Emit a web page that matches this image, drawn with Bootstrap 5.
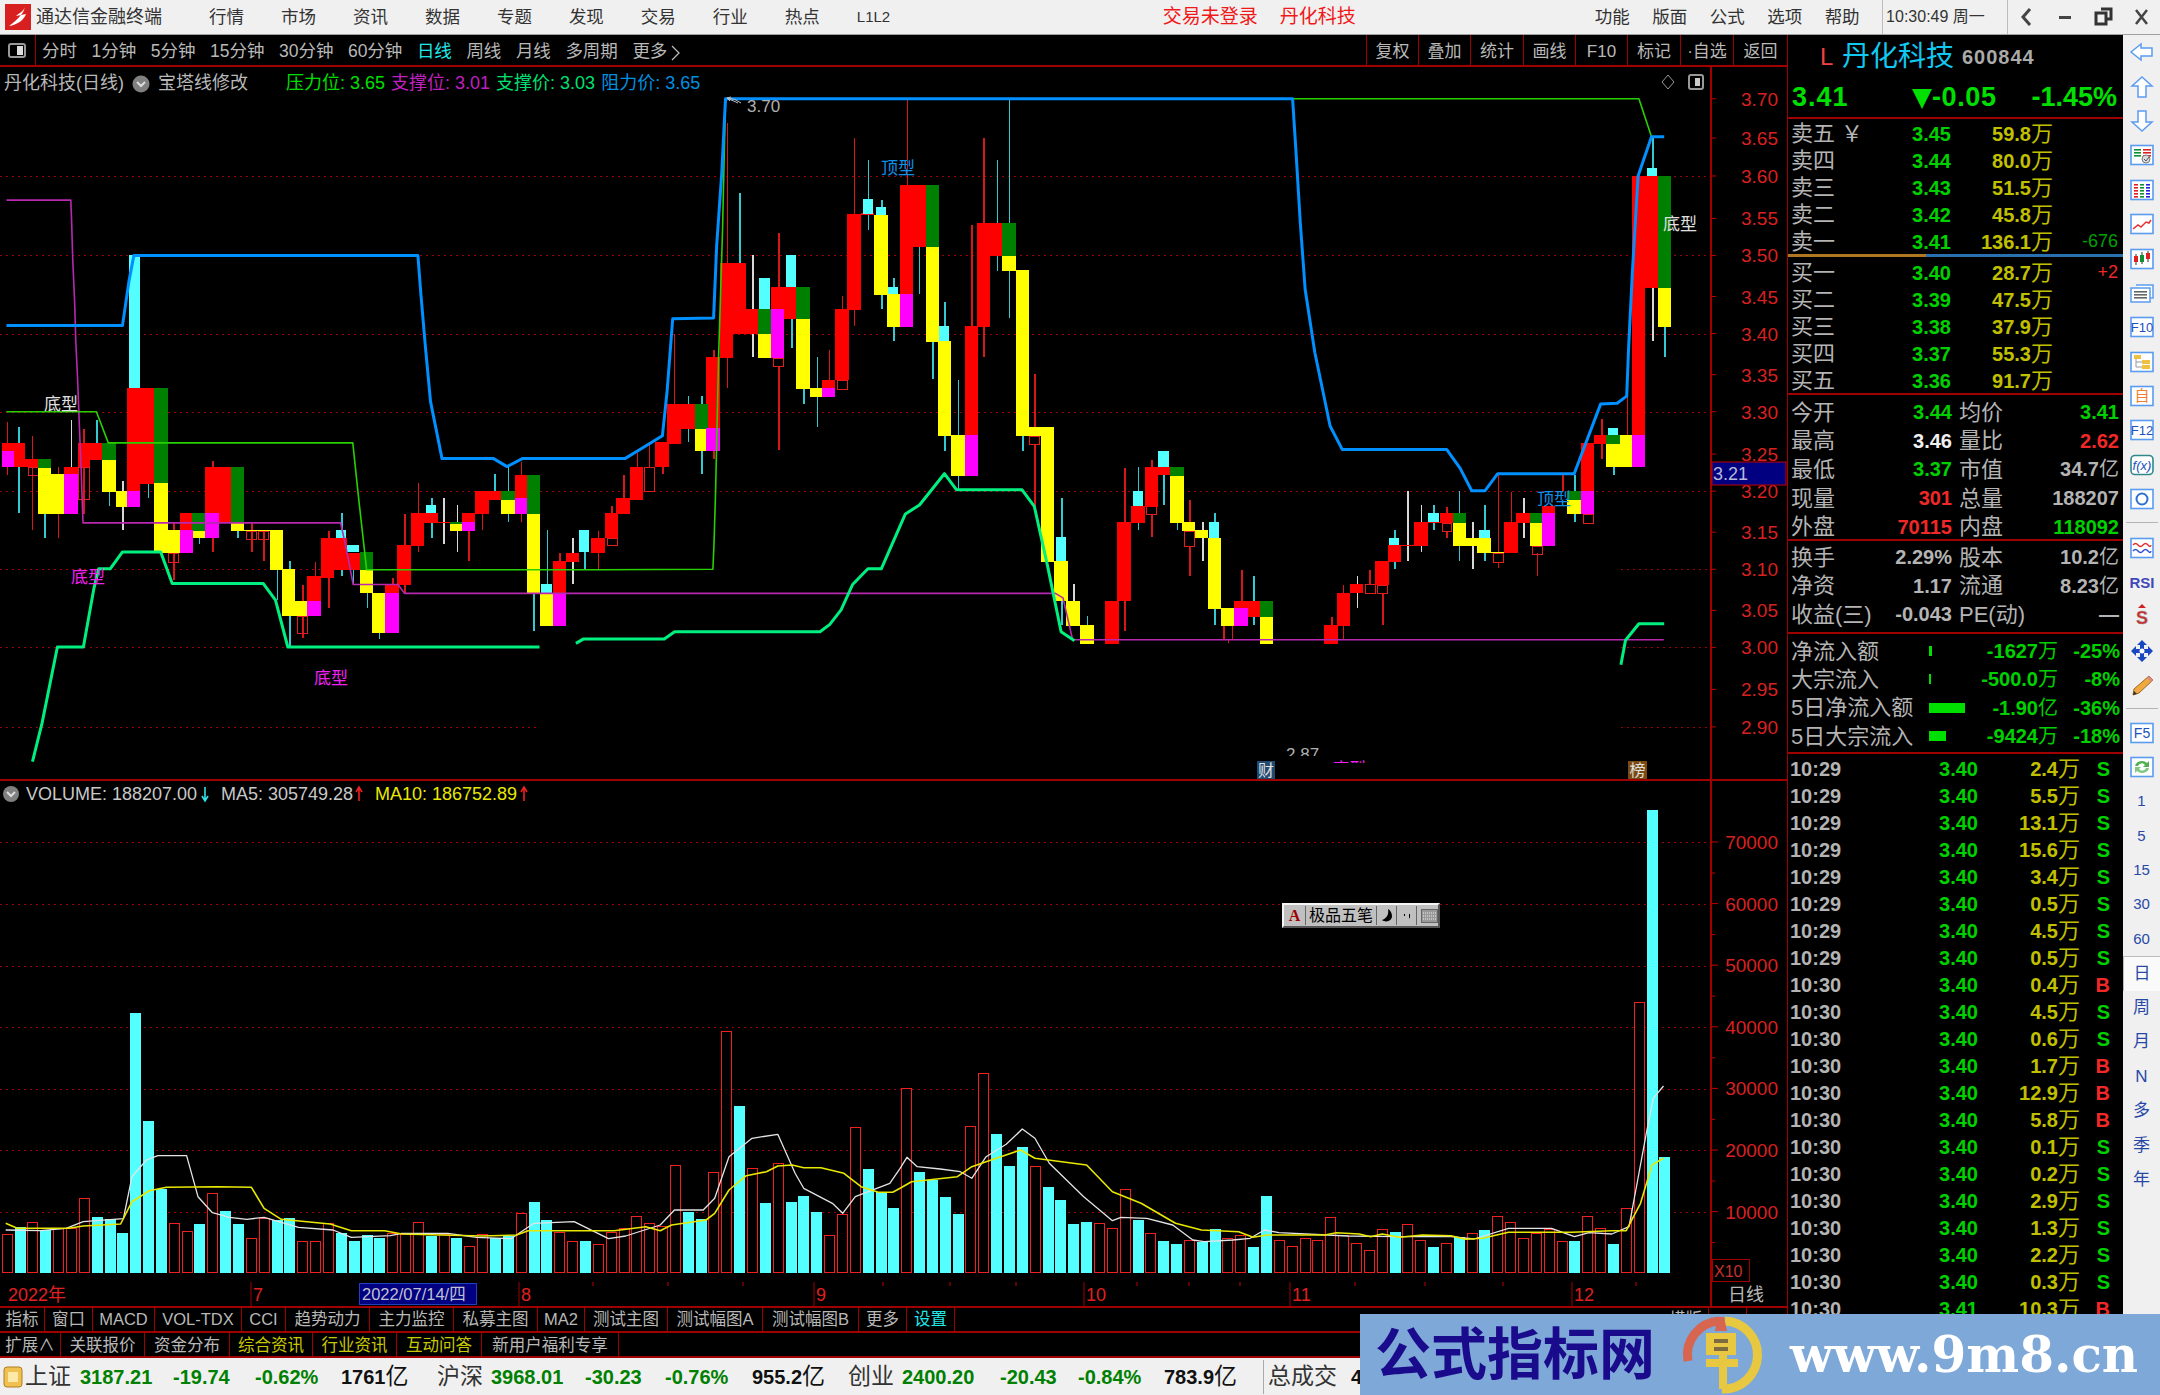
<!DOCTYPE html>
<html lang="zh-CN">
<head>
  <meta charset="UTF-8">
  <title>通达信金融终端</title>
  <link href="https://cdn.jsdelivr.net/npm/bootstrap@5.3.0/dist/css/bootstrap.min.css" rel="stylesheet">
  <script src="https://cdn.jsdelivr.net/npm/bootstrap@5.3.0/dist/js/bootstrap.bundle.min.js"></script>
  <style>
    html, body { margin: 0; background: #000; }
    body, svg text { font-family: "Liberation Sans", "Noto Sans CJK SC", sans-serif; }
    .app { width: 2160px; height: 1395px; overflow: hidden; }
    .titlebar { height: 35px; background: #f0f0f0; border-bottom: 1px solid #a0a0a0; color: #333; font-size: 17.5px; }
    .tb-logo { margin: 0 5px; }
    .tb-name { width: 173px; font-size: 18px; }
    .tb-menu { width: 72px; }
    .tb-l12 { width: 90px; font-size: 15px; }
    .tb-red { color: #f01818; font-size: 19px; margin-left: 216px; width: 117px; }
    .tb-red2 { color: #f01818; font-size: 19px; width: 315px; }
    .tb-r { width: 57.5px; }
    .tb-clock { border-left: 1px solid #bbb; border-right: 1px solid #bbb; height: 34px; width: 126px; padding-left: 3px; font-size: 16px; white-space: nowrap; }
    .tb-win { width: 38px; }
    .mainrow { height: 1323px; }
    .leftcol { width: 1788px; border-right: 1px solid #a00000; background: #000; }
    .toolbar { height: 32px; border-bottom: 2px solid #a00000; color: #b8b8b8; font-size: 17.5px; white-space: nowrap; }
    .tl-first { width: 36px; height: 30px; border-right: 1px solid #a00000; }
    .tl-item { margin-left: 14.5px; padding-top: 3px; }
    .tl-item:first-child { margin-left: 6px; }
    .tl-on { color: #20e8e8; }
    .tr-item { height: 30px; border-left: 1px solid #a00000; padding-top: 3px; font-size: 17px; }
    .chart-wrap { height: 714px; }
    .chart-wrap svg, .vol-svg, .date-svg { display: block; }
    .legend-row { top: 3px; left: 4px; font-size: 18px; color: #b8b8b8; white-space: nowrap; }
    .lg-a { color: #00e000; margin-left: 38px; }
    .lg-b { color: #c020c0; margin-left: 6px; }
    .lg-c { color: #00e070; margin-left: 6px; }
    .lg-d { color: #0090e0; margin-left: 6px; }
    .ime-bar { left: 1282px; top: 122px; width: 158px; height: 25px; background: #c0c0c0; border: 2px solid; border-color: #f4f4f4 #555 #555 #f4f4f4; color: #000; font-size: 16px; }
    .ime-cell { height: 19px; border-right: 1px solid #666; }
    .ime-a { color: #a00000; font-weight: 700; width: 22px; font-family: "Liberation Serif", serif; }
    .ime-name { width: 72px; white-space: nowrap; }
    .ime-s { width: 20px; }
    .tabrow { color: #b8b8b8; font-size: 16.5px; border-top: 2px solid #a00000; white-space: nowrap; }
    .tabrow1 { height: 25px; }
    .tabrow2 { height: 27px; border-bottom: 2px solid #a00000; }
    .tabrow2 .tab-cell { padding-top: 2px; }
    .tab-cell { border-right: 1px solid #a00000; height: 100%; }
    .tab-cyan { color: #20e8e8; }
    .tab-yel { color: #c8c800; }
    .quote { width: 335px; background: #000; color: #b4b4b4; font-size: 22px; }
    .q-head { height: 42px; padding-top: 2px; }
    .q-l { color: #f04040; width: 54px; padding-left: 32px; font-size: 24px; }
    .q-name { color: #10c8f0; font-size: 28px; width: 120px; white-space: nowrap; }
    .q-code { font-size: 20px; font-weight: 700; color: #aaa; letter-spacing: 1px; }
    .q-price { height: 42px; border-bottom: 2px solid #a00000; color: #00e000; font-weight: 700; font-size: 27px; }
    .q-p1 { width: 124px; padding-left: 4px; letter-spacing: 1px; }
    .q-p2 { width: 111px; white-space: nowrap; letter-spacing: .6px; }
    .q-p3 { width: 94px; text-align: right; white-space: nowrap; }
    .ord-row { height: 27px; padding-top: 2px; }
    .num { font-weight: 700; font-size: 20px; }
    .c-l { width: 122px; padding-left: 3px; white-space: nowrap; }
    .c-p { width: 41px; text-align: right; color: #00d000; }
    .c-a { width: 102px; text-align: right; color: #c0c000; white-space: nowrap; }
    .c-a .zh { font-size: 22px; }
    .zh { font-weight: 400; }
    .c-d { width: 65px; text-align: right; font-size: 18px; }
    .q-mid { height: 3px; background: linear-gradient(90deg, #b07820 0 138px, #2870b0 138px); margin-bottom: 1px; }
    .sec { border-top: 2px solid #a00000; }
    .sec-a { height: 146px; padding-top: 2px; }
    .sec-a .st-row { padding-top: 2px; }
    .sec-b { height: 93px; padding-top: 2px; }
    .sec-c { height: 120px; padding-top: 3px; }
    .st-row { height: 28.6px; }
    .s-l { width: 103px; padding-left: 3px; white-space: nowrap; }
    .s-v { width: 61px; text-align: right; white-space: nowrap; }
    .s-l2 { width: 70px; margin-left: 7px; white-space: nowrap; }
    .s-v2 { width: 90px; text-align: right; white-space: nowrap; }
    .fl-row { height: 28.3px; }
    .f-l { width: 141px; padding-left: 3px; white-space: nowrap; }
    .f-b { width: 40px; }
    .f-bar { height: 10px; background: #00e000; }
    .f-n { width: 89px; text-align: right; color: #00d000; white-space: nowrap; }
    .f-p { width: 62px; text-align: right; color: #00d000; }
    .tick-row { height: 27px; font-size: 20px; padding-top: 2px; }
    .tk-t { width: 149px; padding-left: 2px; color: #b4b4b4; }
    .tk-s { width: 30px; text-align: right; }
    .c-g { color: #00d000; }
    .c-g2 { color: #00a000; }
    .c-r { color: #f02828; }
    .c-w { color: #f0f0f0; }
    .c-y { color: #c0c000; }
    .sidebar { width: 37px; background: #f0f0f0; color: #2848a8; font-size: 15px; }
    .sb-item { height: 34.4px; }
    .sb-on { background: #fafafa; border: 1px solid #bbb; border-bottom: 0; border-right: 0; font-size: 17px; }
    .sb-zh { font-size: 17px; }
    .sb-sep { height: 14px; }
    .sb-sep2 { height: 13px; }
    .sb-sep i, .sb-sep2 i { display: block; width: 32px; height: 1px; background: #b4b4b4; margin: 6px auto 0; }
    .statusbar { height: 37px; background: #f0f0f0; color: #111; font-size: 20px; font-weight: 700; white-space: nowrap; }
    .sts-ic { width: 25px; }
    .sts-zh { font-weight: 400; font-size: 23px; color: #333; }
    .sts-g { color: #008000; }
    .sts-u .zh { font-size: 23px; }
    .sts-sep { border-left: 1px solid #aaa; height: 34px; }
    .wm-bar { right: 0; bottom: 0; width: 800px; height: 81px; background: #7da8d8; padding-left: 15px; }
    .wm-zh { color: #1a0a8c; font-size: 56px; font-weight: 700; width: 305px; white-space: nowrap; line-height: 1; }
    .wm-logo { width: 110px; }
    .wm-en { color: #fff; font-family: "DejaVu Serif", serif; font-weight: 700; font-size: 50px; white-space: nowrap; line-height: 1; }
  </style>
</head>
<body>
<div class="app position-relative">

  <!-- title bar -->
  <div class="titlebar d-flex align-items-center" id="titlebar"></div>

  <div class="mainrow d-flex">
    <div class="leftcol d-flex flex-column">
      <!-- period toolbar -->
      <div class="toolbar d-flex align-items-center">
        <div class="tl-first d-flex align-items-center">
          <svg class="ms-2" width="18" height="15" viewBox="0 0 18 15"><rect x="1" y="1" width="16" height="13" rx="2" fill="none" stroke="#999" stroke-width="2"/><rect x="9" y="3" width="6" height="9" fill="#ddd"/></svg>
        </div>
        <div class="d-flex" id="periodItems"></div>
        <div class="d-flex ms-auto" id="toolItems"></div>
      </div>

      <!-- kline -->
      <div class="chart-wrap position-relative">
        <svg id="mainChart" width="1787" height="714" viewBox="0 67 1787 714"></svg>
        <div class="legend-row position-absolute d-flex align-items-center">
          <span>丹化科技(日线)</span>
          <svg class="mx-2" width="18" height="18" viewBox="0 0 18 18"><circle cx="9" cy="9" r="8.5" fill="#808080"/><path d="M5 7l4 4 4-4" fill="none" stroke="#ddd" stroke-width="2"/></svg>
          <span>宝塔线修改</span>
          <span class="lg-a">压力位: 3.65</span>
          <span class="lg-b">支撑位: 3.01</span>
          <span class="lg-c">支撑价: 3.03</span>
          <span class="lg-d">阻力价: 3.65</span>
        </div>
        <svg class="position-absolute" style="left:1660px;top:6px" width="46" height="18" viewBox="0 0 46 18"><path d="M8 2l6 7-6 7-6-7z" fill="none" stroke="#999"/><rect x="29" y="2" width="14" height="14" rx="2" fill="none" stroke="#999" stroke-width="2"/><rect x="35" y="5" width="5" height="8" fill="#ccc"/></svg>
      </div>

      <!-- volume -->
      <div class="position-relative">
        <svg class="vol-svg" id="volChart" width="1787" height="501" viewBox="0 781 1787 501"></svg>
        <!-- input method bar floating over the volume pane -->
        <div class="ime-bar position-absolute d-flex align-items-center">
          <span class="ime-cell ime-a d-flex align-items-center justify-content-center">A</span>
          <span class="ime-cell ime-name d-flex align-items-center justify-content-center">极品五笔</span>
          <span class="ime-cell ime-s d-flex align-items-center justify-content-center"><svg width="12" height="16" viewBox="0 0 12 16"><path d="M7 1c1 5-1 9-6 11 4 3 10 1 10-4 0-3-2-6-4-7z" fill="#000"/></svg></span>
          <span class="ime-cell ime-s d-flex align-items-center justify-content-center"><svg width="10" height="12" viewBox="0 0 10 12"><path d="M2 4h1v2H2zM7 4h1v3l-1 2z" fill="#000"/></svg></span>
          <span class="d-flex align-items-center ps-1"><svg width="17" height="14" viewBox="0 0 17 14"><rect x=".5" y=".5" width="16" height="13" fill="#999" stroke="#666"/><path d="M2 4h13M2 7h13M2 10h13" stroke="#eee" stroke-dasharray="1 1"/></svg></span>
        </div>
      </div>

      <!-- date axis -->
      <svg class="date-svg" id="dateAxis" width="1787" height="24" viewBox="0 1282 1787 24"></svg>

      <div class="tabrow tabrow1 d-flex" id="tabs1"></div>
      <div class="tabrow tabrow2 d-flex" id="tabs2"></div>
    </div>

    <!-- quote panel -->
    <div class="quote d-flex flex-column">
      <div class="q-head d-flex align-items-center">
        <span class="q-l">L</span>
        <span class="q-name">丹化科技</span>
        <span class="q-code">600844</span>
      </div>
      <div class="q-price d-flex align-items-center">
        <span class="q-p1">3.41</span>
        <span class="q-p2"><svg width="20" height="21" viewBox="0 0 20 21"><path d="M0 1h20L10 21z" fill="#00e000"/></svg>-0.05</span>
        <span class="q-p3">-1.45%</span>
      </div>
      <div id="sellRows"></div>
      <div class="q-mid"></div>
      <div id="buyRows"></div>
      <div class="sec sec-a" id="statsA"></div>
      <div class="sec sec-b" id="statsB"></div>
      <div class="sec sec-c" id="flows"></div>
      <div class="sec" id="ticks"></div>
    </div>

    <!-- right icon rail -->
    <div class="sidebar d-flex flex-column align-items-center" id="sidebar"></div>
  </div>

  <!-- index status bar -->
  <div class="statusbar d-flex align-items-center" id="statusbar"></div>

  <!-- site watermark -->
  <div class="wm-bar position-absolute d-flex align-items-center">
    <div class="wm-zh">公式指标网</div>
    <div class="wm-logo">
      <svg width="84" height="80" viewBox="0 0 84 80">
        <path d="M8 46A34 34 0 0 1 39 6" fill="none" stroke="#d8654f" stroke-width="9"/>
        <path d="M45 6A34 34 0 0 1 42 74" fill="none" stroke="#e8c840" stroke-width="9"/>
        <path d="M38 2h6l3 14h-12z" fill="#d8654f"/>
        <path d="M26 18h30v22H47v4h11v8H47v22h-8V52H26v-8h13v-4H26z" fill="#e8c840"/>
        <path d="M34 24h14v4H34zM34 32h14v4H34z" fill="#7d6a40"/>
      </svg>
    </div>
    <div class="wm-en">www.9m8.cn</div>
  </div>
</div>

<script>
  // ---------- small html helpers ----------
  const byId = id => document.getElementById(id);
  const zhNum = s => s.replace(/([万亿])/g, '<span class="zh">$1</span>');

  const winIcons = [
    '<path d="M14 4l-7 8 7 8" fill="none" stroke="#444" stroke-width="3"/>',
    '<rect x="5" y="11" width="12" height="3" fill="#444"/>',
    '<path d="M9 4h10v10h-4M4 8h10v11H4z" fill="none" stroke="#333" stroke-width="3"/>',
    '<path d="M6 5l11 14M17 5L6 19" fill="none" stroke="#444" stroke-width="2.5"/>'
  ];

  byId('titlebar').innerHTML =
    `<svg class="tb-logo" width="26" height="26" viewBox="0 0 26 26"><rect width="26" height="26" fill="#d82020"/><path d="M20 3c-2 5-6 6-9 9l5-1c-3 4-7 7-12 11 8-1 15-6 17-12l-5 1c2-2 3-5 4-8z" fill="#fff"/></svg>` +
    `<span class="tb-name">通达信金融终端</span>` +
    ['行情','市场','资讯','数据','专题','发现','交易','行业','热点'].map(t => `<span class="tb-menu">${t}</span>`).join('') +
    `<span class="tb-l12">L1L2</span><span class="tb-red">交易未登录</span><span class="tb-red2">丹化科技</span>` +
    ['功能','版面','公式','选项','帮助'].map(t => `<span class="tb-r">${t}</span>`).join('') +
    `<span class="tb-clock d-flex align-items-center">10:30:49&nbsp;周一</span>` +
    winIcons.map(p => `<span class="tb-win d-flex justify-content-center"><svg width="22" height="24" viewBox="0 0 22 24">${p}</svg></span>`).join('');

  const chevron = '<svg class="ms-1" width="9" height="16" viewBox="0 0 9 16"><path d="M1 1l7 7-7 7" fill="none" stroke="#b8b8b8" stroke-width="1.3"/></svg>';
  const periods = ['分时','1分钟','5分钟','15分钟','30分钟','60分钟','日线','周线','月线','多周期','更多' + chevron];
  byId('periodItems').innerHTML = periods.map(t => `<span class="tl-item${t === '日线' ? ' tl-on' : ''}">${t}</span>`).join('');

  const tools = [['复权',52],['叠加',52],['统计',53],['画线',52],['F10',52],['标记',53],['·自选',53],['返回',54]];
  byId('toolItems').innerHTML = tools.map(([t, w]) =>
    `<span class="tr-item d-flex align-items-center justify-content-center" style="width:${w}px">${t}</span>`).join('');

  const tabCell = ([t, w, c]) =>
    `<span class="tab-cell d-flex align-items-center justify-content-center ${c || ''}" style="width:${w}px">${t}</span>`;
  byId('tabs1').innerHTML = [['指标',45],['窗口',48],['MACD',62],['VOL-TDX',87],['CCI',44],['趋势动力',84],['主力监控',84],['私募主图',84],['MA2',47],['测试主图',83],['测试幅图A',95],['测试幅图B',96],['更多',48],['设置',48,'tab-cyan']].map(tabCell).join('')
    + '<span class="ms-auto d-flex h-100">' + [['横版',46],['',38]].map(tabCell).join('') + '<span style="width:40px"></span></span>';
  byId('tabs2').innerHTML = [['扩展∧',61],['关联报价',84],['资金分布',85],['综合资讯',83,'tab-yel'],['行业资讯',84,'tab-yel'],['互动问答',85,'tab-yel'],['新用户福利专享',137]].map(tabCell).join('');

  // ---------- quote panel ----------
  const ordRow = (lab, p, a, d, dc) =>
    `<div class="ord-row d-flex align-items-center"><span class="c-l">${lab}</span><span class="c-p num">${p}</span>` +
    `<span class="c-a num">${zhNum(a)}</span><span class="c-d ${dc || ''}">${d || ''}</span></div>`;
  byId('sellRows').innerHTML = [
    ['卖五 ￥','3.45','59.8万'],['卖四','3.44','80.0万'],['卖三','3.43','51.5万'],['卖二','3.42','45.8万'],['卖一','3.41','136.1万','-676','c-g2']
  ].map(r => ordRow(...r)).join('');
  byId('buyRows').innerHTML = [
    ['买一','3.40','28.7万','+2','c-r'],['买二','3.39','47.5万'],['买三','3.38','37.9万'],['买四','3.37','55.3万'],['买五','3.36','91.7万']
  ].map(r => ordRow(...r)).join('');

  const stRow = ([a, v, vc, b, w, wc]) =>
    `<div class="st-row d-flex align-items-center"><span class="s-l">${a}</span><span class="s-v num ${vc}">${v}</span>` +
    `<span class="s-l2">${b}</span><span class="s-v2 num ${wc}">${zhNum(w)}</span></div>`;
  byId('statsA').innerHTML = [
    ['今开','3.44','c-g','均价','3.41','c-g'],['最高','3.46','c-w','量比','2.62','c-r'],['最低','3.37','c-g','市值','34.7亿',''],
    ['现量','301','c-r','总量','188207',''],['外盘','70115','c-r','内盘','118092','c-g']
  ].map(stRow).join('');
  byId('statsB').innerHTML = [
    ['换手','2.29%','','股本','10.2亿',''],['净资','1.17','','流通','8.23亿',''],['收益(三)','-0.043','','PE(动)','—','']
  ].map(stRow).join('');

  byId('flows').innerHTML = [
    ['净流入额',3,'-1627万','-25%'],['大宗流入',2,'-500.0万','-8%'],['5日净流入额',36,'-1.90亿','-36%'],['5日大宗流入',17,'-9424万','-18%']
  ].map(([l, w, n, p]) =>
    `<div class="fl-row d-flex align-items-center"><span class="f-l">${l}</span><span class="f-b"><div class="f-bar" style="width:${w}px"></div></span>` +
    `<span class="f-n num">${zhNum(n)}</span><span class="f-p num">${p}</span></div>`).join('');

  const ticks = [['10:29','2.4','S'],['10:29','5.5','S'],['10:29','13.1','S'],['10:29','15.6','S'],['10:29','3.4','S'],['10:29','0.5','S'],['10:29','4.5','S'],['10:29','0.5','S'],
    ['10:30','0.4','B'],['10:30','4.5','S'],['10:30','0.6','S'],['10:30','1.7','B'],['10:30','12.9','B'],['10:30','5.8','B'],['10:30','0.1','S'],['10:30','0.2','S'],['10:30','2.9','S'],['10:30','1.3','S'],['10:30','2.2','S'],['10:30','0.3','S'],['10:30','10.3','B','3.41']];
  byId('ticks').innerHTML = ticks.map(([t, v, s, p]) =>
    `<div class="tick-row d-flex align-items-center"><span class="tk-t num">${t}</span><span class="c-p num">${p || '3.40'}</span>` +
    `<span class="c-a num">${v}<span class="zh">万</span></span><span class="tk-s num ${s === 'S' ? 'c-g' : 'c-r'}">${s}</span></div>`).join('');

  // ---------- right rail icons ----------
  const B = '#5a9cf0';
  const ic = inner => `<svg width="26" height="24" viewBox="0 0 26 24">${inner}</svg>`;
  const boxIc = inner => ic(`<rect x="2" y="2.5" width="22" height="19" fill="#fff" stroke="${B}" stroke-width="1.6"/>${inner}`);
  const boxTxt = (t, c, s) => boxIc(`<text x="13" y="17" text-anchor="middle" font-size="${s || 14}" fill="${c}">${t}</text>`);
  const bars = (x, y, w, c, n) => Array.from({ length: n }, (_, i) => `<rect x="${x}" y="${y + i * 3}" width="${w}" height="1.6" fill="${c}"/>`).join('');
  const railTop = [
    ic(`<path d="M2 12l10-8v4h11v8H12v4z" fill="#fff" stroke="${B}" stroke-width="1.5"/>`),
    ic(`<path d="M13 2l10 9h-6v11H9V11H3z" fill="#fff" stroke="${B}" stroke-width="1.5"/>`),
    ic(`<path d="M13 22L3 13h6V2h8v11h6z" fill="#fff" stroke="${B}" stroke-width="1.5"/>`),
    boxIc(bars(5, 6, 7, '#109030', 3) + bars(14, 6, 8, '#e02020', 3) + '<circle cx="17" cy="16" r="4" fill="#ddd" stroke="#777"/><path d="M15 16l2 2 3-4" fill="none" stroke="#555"/>'),
    boxIc(bars(5, 6, 4, '#e02020', 5) + bars(11, 6, 4, '#109030', 5) + bars(17, 6, 4, '#2020e0', 5)),
    boxIc('<path d="M4 17l5-4 3 2 5-5 3 1 2-3" fill="none" stroke="#e83030" stroke-width="1.5"/>'),
    boxIc('<path d="M7 7v11M13 5v12M19 4v11" stroke="#333"/><rect x="5" y="9" width="4" height="6" fill="#e02020"/><rect x="11" y="8" width="4" height="7" fill="#109030"/><rect x="17" y="6" width="4" height="6" fill="#e02020"/>'),
    ic(`<path d="M7 4h17v13h-3" fill="#fff" stroke="${B}" stroke-width="1.5"/><rect x="2" y="7" width="19" height="14" fill="#fff" stroke="${B}" stroke-width="1.5"/>` + bars(5, 10, 13, '#666', 3)),
    boxTxt('F10', '#2050c0', 13),
    boxIc('<rect x="5" y="5" width="7" height="4" fill="#f0c040"/><rect x="13" y="10" width="8" height="4" fill="#f0c040"/><rect x="13" y="15" width="8" height="4" fill="#f0c040"/><path d="M7 9v8h6M7 12h6" fill="none" stroke="#999"/>'),
    boxTxt('自', '#f08030', 15),
    boxTxt('F12', '#2050c0', 13),
    ic(`<rect x="2" y="2.5" width="22" height="19" rx="4" fill="#fff" stroke="#2c8a8a" stroke-width="1.6"/><text x="13" y="17" text-anchor="middle" font-size="13" font-style="italic" fill="#2050c0">f(x)</text>`),
    boxIc('<circle cx="13" cy="12" r="5.5" fill="none" stroke="#3070d0" stroke-width="2"/>'),
    'sep',
    boxIc('<path d="M4 9q2.500-3 5 0t5 0 5 0 3 0" fill="none" stroke="#e03030" stroke-width="1.4"/><path d="M4 15q2.500-3 5 0t5 0 5 0 3 0" fill="none" stroke="#3050d0" stroke-width="1.4"/>'),
    ic('<text x="13" y="18" text-anchor="middle" font-size="15" font-weight="700" fill="#4048b8">RSI</text>'),
    ic('<path d="M13 0l4 4h-8z" fill="#d02020"/><text x="13" y="20" text-anchor="middle" font-size="18" font-weight="700" fill="#c83030" stroke="#999" stroke-width=".4">S</text>'),
    ic('<path d="M13 1l5 5h-3v4h4V7l5 5-5 5v-3h-4v4h3l-5 5-5-5h3v-4H7v3l-5-5 5-5v3h4V6H8z" fill="#1848c0"/><circle cx="13" cy="12" r="2.500" fill="#fff"/>'),
    ic('<path d="M20 3l4 4L10 20l-6 2 1-6z" fill="#f0a840" stroke="#a06820"/><path d="M20 3l4 4-2 2-4-4z" fill="#d88"/><path d="M4 22l1-4 3 3z" fill="#333"/>'),
    'sep2',
    boxTxt('F5', '#2050c0', 14),
    boxIc('<path d="M6 11a7 6 0 0 1 12-3l2-2v6h-6l2-2a4 4 0 0 0-7 1z" fill="#50b050"/><path d="M20 13a7 6 0 0 1-12 3l-2 2v-6h6l-2 2a4 4 0 0 0 7-1z" fill="#80c880"/>')
  ];
  let rail = railTop.map(h => h === 'sep' ? '<div class="sb-sep w-100"><i></i></div>' : h === 'sep2' ? '<div class="sb-sep2 w-100"><i></i></div>' :
    `<div class="sb-item d-flex align-items-center">${h}</div>`).join('');
  rail += ['1','5','15','30','60'].map(t => `<div class="sb-item d-flex align-items-center">${t}</div>`).join('');
  rail += '<div class="sb-item sb-on w-100 d-flex align-items-center justify-content-center">日</div>';
  rail += ['周','月','N','多','季','年'].map(t => `<div class="sb-item sb-zh d-flex align-items-center">${t}</div>`).join('');
  byId('sidebar').innerHTML = rail;

  // ---------- status bar ----------
  const sts = [['上证',55,'sts-zh'],['3187.21',93,'sts-g'],['-19.74',82,'sts-g'],['-0.62%',86,'sts-g'],['1761亿',96,'sts-u'],
    ['沪深',54,'sts-zh'],['3968.01',94,'sts-g'],['-30.23',80,'sts-g'],['-0.76%',87,'sts-g'],['955.2亿',96,'sts-u'],
    ['创业',54,'sts-zh'],['2400.20',98,'sts-g'],['-20.43',78,'sts-g'],['-0.84%',86,'sts-g'],['783.9亿',99,'sts-u']];
  byId('statusbar').innerHTML =
    `<span class="sts-ic d-flex justify-content-center"><svg width="20" height="24" viewBox="0 0 20 24"><rect x="1" y="2" width="18" height="20" rx="3" fill="#f0c050" stroke="#b08020"/><rect x="5" y="7" width="10" height="10" fill="#fbe9a8"/></svg></span>` +
    sts.map(([t, w, c]) => `<span class="${c}" style="width:${w}px">${zhNum(t)}</span>`).join('') +
    '<span class="sts-sep me-1"></span><span class="sts-zh" style="width:83px">总成交</span><span>4</span>';

  // ---------- kline chart, data read off in crop coordinates ----------
  const mx = (ox, z) => ox + z / 2.6133;
  const my = z => 80 + z / 2.24;
  const COL = { r: '#ff0000', g: '#008000', y: '#ffff00', m: '#ff00ff', c: '#54ffff' };
  const R = '#d81818', CY = '#34c8d0', W = '#d8d8d8';

  const groups = [
    { ox: 0,
      r: [[5,813,66,830],[36,830,66,868],[66,850,98,868],[168,867,204,883],[204,813,235,868],[235,813,267,852],[333,690,367,920],[367,690,403,905],[470,970,502,1007],[537,867,572,970],[572,867,603,992],[803,1112,838,1166],[838,1025,873,1115],[873,1025,908,1097],[908,1060,941,1097],[1007,1132,1042,1148],[1038,1041,1074,1132],[1074,970,1109,1043],[1109,970,1145,992],[1145,989,1175,993],[1208,970,1242,990],[1242,921,1277,973],[1277,921,1310,940],[1345,884,1377,937],[1444,1078,1478,1150],[1478,1060,1513,1080],[1545,1025,1568,1060]],
      g: [[98,850,133,870],[267,813,302,852],[403,690,438,903],[502,970,537,1010],[603,867,638,992],[941,1058,975,1097],[1175,990,1208,995],[1310,921,1345,940],[1377,884,1411,973]],
      y: [[98,870,133,972],[133,883,168,972],[267,852,302,923],[302,920,333,956],[403,903,438,1060],[438,1007,470,1060],[505,1010,537,1027],[603,992,638,1010],[638,1007,705,1010],[705,1007,740,1097],[738,1095,772,1200],[772,1166,803,1200],[941,1097,975,1150],[973,1148,1007,1238],[1175,995,1208,1010],[1310,940,1345,973],[1377,973,1411,1149],[1411,1150,1444,1222]],
      m: [[5,830,36,868],[168,883,204,972],[333,920,367,956],[470,1007,505,1060],[537,970,572,1027],[803,1166,838,1200],[1007,1148,1042,1238],[1208,990,1242,1010],[1345,937,1377,973],[1444,1150,1478,1222]],
      c: [[338,392,365,690],[878,1007,905,1025],[908,1041,937,1058],[1113,953,1140,970],[1415,1128,1443,1150],[1513,1008,1540,1058]],
      h: [[72,868,98,886],[204,868,232,940],[440,1060,466,1080],[643,1010,670,1027],[675,1010,702,1027],[776,1200,803,1238]],
      wr: [[18,765,885],[83,798,1007],[151,868,1025],[218,782,972],[453,990,1120],[554,853,867],[554,1027,1058],[656,992,1058],[688,1010,1077],[789,1132,1250],[822,1080,1112],[857,1010,1025],[857,1115,1182],[1025,1115,1132],[1056,972,1041],[1056,1132,1150],[1092,903,970],[1092,1043,1058],[1224,1010,1077],[1259,973,1007],[1361,855,884],[1361,973,990],[1461,1060,1078],[1562,1010,1025],[1562,1060,1095]],
      wc: [[48,778,970],[115,972,1025],[252,762,813],[284,923,955],[386,905,937],[519,1027,1040],[620,1010,1025],[723,1097,1165],[755,1078,1270],[891,970,1007],[891,1098,1112],[922,1097,1130],[958,1150,1182],[990,1238,1252],[1127,937,1025],[1292,883,921],[1327,867,921],[1327,973,990],[1393,1150,1235],[1429,1007,1128],[1527,1058,1095]],
      ww: [[185,762,868],[319,898,1007],[1158,937,1040],[1193,953,1058],[1495,1025,1128]]
    },
    { ox: 600,
      r: [[0,1025,12,1060],[12,970,47,1027],[43,937,78,972],[78,867,113,940],[145,812,180,868],[176,726,212,815],[212,726,247,782],[278,620,313,780],[313,410,348,623],[348,410,381,570],[381,513,412,570],[447,463,482,513],[482,463,513,536],[580,671,615,691],[615,513,650,673],[646,301,682,515],[682,299,717,303],[784,235,819,480],[819,235,851,375],[953,550,988,796],[984,321,1019,553],[1019,321,1051,394],[1320,1166,1356,1263],[1352,991,1388,1168],[1388,954,1423,993],[1423,867,1458,956],[1458,867,1490,885]],
      g: [[247,726,281,782],[412,513,447,570],[513,463,549,536],[851,235,886,375],[1051,321,1086,394],[1490,867,1525,886]],
      y: [[247,782,278,832],[412,570,447,623],[513,536,549,693],[549,691,581,711],[717,303,753,482],[749,480,784,553],[851,375,886,586],[882,584,917,798],[917,796,953,886],[1051,394,1086,428],[1086,426,1121,798],[1121,778,1152,798],[1152,778,1187,1080],[1187,1078,1222,1167],[1219,1166,1254,1222],[1254,1220,1290,1263],[1490,886,1525,993],[1521,991,1556,1010],[1556,1008,1568,1027]],
      m: [[278,780,313,832],[447,513,482,623],[580,691,615,711],[784,480,819,553],[953,796,988,886]],
      c: [[416,443,443,513],[486,392,513,463],[686,267,713,301],[722,284,748,303],[753,463,780,480],[886,550,913,584],[1192,1024,1219,1078],[1392,921,1419,954],[1458,830,1486,867]],
      h: [[17,1027,43,1043],[115,868,140,922],[451,623,477,640],[620,673,646,693],[1122,798,1148,815],[1427,954,1453,973],[1526,1010,1552,1043]],
      wr: [[29,955,970],[60,885,937],[96,835,867],[127,818,868],[163,868,882],[193,570,726],[296,605,620],[296,832,850],[331,97,410],[331,623,690],[465,342,463],[465,640,828],[598,605,671],[632,484,513],[663,130,301],[663,515,550],[802,42,235],[970,325,550],[1001,130,321],[1001,553,620],[1135,658,778],[1135,815,955],[1370,870,991],[1370,1168,1235],[1440,852,867],[1440,973,1023],[1539,940,991],[1539,1043,1110]],
      wc: [[229,708,726],[229,782,812],[264,708,726],[264,832,883],[363,252,410],[500,536,600],[531,693,725],[566,620,691],[566,711,778],[700,180,267],[700,303,337],[735,268,284],[735,482,513],[766,443,463],[766,553,585],[833,375,480],[868,586,670],[899,497,550],[899,798,830],[935,672,796],[935,886,918],[1037,180,321],[1037,394,428],[1068,42,321],[1068,428,533],[1103,798,830],[1205,937,1024],[1205,1167,1220],[1272,1200,1220],[1405,867,921],[1405,993,1007],[1472,885,952],[1507,993,1007]],
      ww: [[398,392,513],[398,570,620],[1236,1128,1166]]
    },
    { ox: 1200,
      r: [[90,1166,125,1183],[125,1166,157,1202],[325,1220,361,1263],[357,1149,392,1222],[392,1130,427,1150],[458,1078,494,1132],[490,1041,525,1080],[525,1041,560,1044],[560,991,596,1043],[596,990,627,993],[627,971,660,993],[795,991,831,1060],[827,971,862,993],[893,955,928,971],[995,813,1030,921],[1030,796,1062,815],[1129,215,1164,796],[1164,215,1196,465]],
      g: [[157,1166,192,1202],[660,971,694,993],[862,971,897,993],[960,921,995,940],[1062,796,1097,815],[1196,215,1230,465]],
      y: [[0,1008,22,1025],[20,1025,55,1185],[55,1183,90,1222],[157,1202,192,1263],[660,993,694,1043],[694,1025,725,1043],[725,1025,760,1060],[760,1057,795,1060],[862,993,893,1043],[960,940,995,973],[1062,815,1097,868],[1097,796,1129,868],[1196,465,1230,553]],
      m: [[90,1183,125,1222],[893,971,928,1043],[995,921,1030,973],[1129,796,1164,868]],
      c: [[24,991,50,1025],[494,1025,521,1041],[597,971,624,991],[730,1008,757,1025],[1066,779,1093,796],[1168,198,1195,215]],
      h: [[430,1130,455,1150],[463,1132,490,1150],[632,993,656,1010],[765,1060,791,1080],[867,1043,893,1060],[1000,973,1026,993]],
      wr: [[60,1222,1252],[83,1222,1252],[72,1252,1262],[107,1098,1166],[343,1203,1220],[373,1132,1149],[373,1222,1252],[442,1098,1130],[476,1150,1220],[644,957,971],[644,1010,1025],[778,882,1060],[778,1080,1093],[812,923,991],[880,1060,1112],[946,885,921],[1048,760,796],[1048,815,850],[1115,708,796]],
      wc: [[37,971,991],[37,1185,1220],[139,1112,1166],[139,1202,1220],[507,1008,1025],[507,1080,1096],[610,953,971],[610,991,1007],[676,920,971],[676,1043,1078],[743,953,1008],[743,1060,1078],[978,885,921],[978,973,990],[1080,868,885],[1181,130,198],[1213,553,620]],
      ww: [[5,990,1078],[410,1112,1130],[410,1150,1183],[542,920,1078],[577,953,991],[577,1043,1058],[711,990,1095],[844,937,1025],[1181,465,585]]
    }
  ];

  const pxRect = (x1, y1, x2, y2, fill, extra) =>
    `<rect x="${Math.round(x1)}" y="${Math.round(y1)}" width="${Math.max(1, Math.round(x2) - Math.round(x1))}" height="${Math.max(1, Math.round(y2) - Math.round(y1))}" fill="${fill}" ${extra || ''}/>`;
  const poly = (pts, color, w) => `<polyline points="${pts.map(p => p.join(',')).join(' ')}" fill="none" stroke="${color}" stroke-width="${w}" stroke-linejoin="round"/>`;
  const seg = (ox, flat, yf) => { const o = []; for (let i = 0; i < flat.length; i += 2) o.push([+(mx(ox, flat[i])).toFixed(1), +(yf(flat[i + 1])).toFixed(1)]); return o; };

  let m = '<defs><clipPath id="cut1"><rect x="1200" y="730" width="200" height="26"/></clipPath><clipPath id="cut2"><rect x="1300" y="756" width="100" height="7"/></clipPath></defs>';
  // grid
  [176, 255.4, 333.6, 411.7, 491, 569, 647, 727].forEach(y => {
    const yy = Math.round(y) + .5;
    if (y > 560) {
      m += `<path d="M0 ${yy}H540M1621 ${yy}H1711" stroke="#a00000" stroke-dasharray="2 4"/>`;
    } else {
      m += `<path d="M0 ${yy}H1711" stroke="#a00000" stroke-dasharray="2 4"/>`;
    }
  });
  // wicks, hollow bodies, filled tower blocks
  groups.forEach(g => {
    const wick = (list, c) => list.forEach(([x, a, b]) => { m += pxRect(mx(g.ox, x), my(a), mx(g.ox, x) + 1.6, my(b), c); });
    wick(g.wr, R); wick(g.wc, CY); wick(g.ww, W);
    g.h.forEach(([a, b, c, d]) => {
      m += `<rect x="${Math.round(mx(g.ox, a)) + .5}" y="${Math.round(my(b)) + .5}" width="${Math.round((c - a) / 2.6133)}" height="${Math.round((d - b) / 2.24)}" fill="none" stroke="#e02020"/>`;
    });
    ['r', 'g', 'y', 'm', 'c'].forEach(k => g[k].forEach(([a, b, c, d]) => { m += pxRect(mx(g.ox, a), my(b), mx(g.ox, c), my(d), COL[k]); }));
  });
  // indicator lines
  const blue = [...seg(0, [17,550,320,550,337,450,350,393,1092,393,1100,480,1112,600,1125,720,1155,848,1290,848,1325,866,1365,848,1568,848], my),
    ...seg(600, [65,848,100,830,163,797,175,700,190,535,297,533,305,370,318,210,328,42,1568,42], my),
    ...seg(1200, [242,42,250,150,262,320,275,470,300,610,340,775,372,828,645,828,680,870,710,920,745,920,778,882,978,882,1047,726,1090,724,1115,708,1120,600,1130,430,1145,215,1180,127,1213,127], my)];
  const thinGreen = [...seg(0, [17,743,252,743,283,813,922,813,935,920,958,1097,1568,1097], my),
    ...seg(600, [295,1096,298,1040,302,920,310,620,320,340,328,42], my)];
  const thinGreen2 = seg(1200, [242,42,1147,42,1180,127], my);
  const purple = [...seg(0, [17,269,185,269,187,315,190,400,195,495,198,585,203,675,207,765,212,870,217,992,890,992,905,1050,923,1130,1040,1130,1057,1150,1568,1150], my),
    ...seg(600, [1190,1150,1210,1160,1235,1254,1568,1254], my), ...seg(1200, [1212,1254], my)];
  const spring1 = seg(0, [85,1527,110,1440,150,1270,218,1270,245,1140,258,1095,288,1095,320,1057,420,1057,450,1128,688,1128,720,1165,752,1270,1410,1270], my);
  const spring2 = [...seg(0, [1505,1262,1525,1252], my),
    ...seg(600, [168,1252,195,1236,575,1236,600,1220,630,1187,660,1130,700,1095,735,1095,798,972,835,952,900,882,932,918,1103,918,1135,955,1170,1090,1205,1236,1240,1256], my)];
  const spring3 = seg(1200, [1100,1310,1112,1255,1147,1218,1213,1218], my);
  m += poly(purple, '#b828b0', 1.6) + poly(thinGreen, '#28d000', 1.6) + poly(thinGreen2, '#28d000', 1.6);
  m += poly(spring1, '#00f080', 3) + poly(spring2, '#00f080', 3) + poly(spring3, '#00f080', 3);
  m += poly(blue, '#0090ff', 3);
  // y axis
  m += '<path d="M1711 67V781" stroke="#a00000" stroke-width="2"/>';
  const axisZ = [42,130,215,310,393,485,568,660,743,838,921,1013,1096,1188,1271,1365,1449];
  axisZ.forEach((z, i) => {
    const y = my(z), v = (3.7 - i * 0.05).toFixed(2);
    m += `<path d="M1711 ${y}h5" stroke="#c00000"/><text x="1778" y="${y + 7}" text-anchor="end" font-size="19" fill="#d82020">${v}</text>`;
  });
  m += '<rect x="1712" y="462" width="74" height="23" fill="#000080" stroke="#c00000"/><text x="1713" y="480" font-size="18" fill="#b8b8d8">3.21</text>';
  // chart labels
  const lab = (t, x, y, c, extra) => `<text x="${x}" y="${y}" font-size="17" fill="${c}" ${extra || ''}>${t}</text>`;
  m += lab('底型', 44, 410, '#e0e0e0') + lab('底型', 71, 583, '#f020f0') + lab('底型', 314, 684, '#f020f0') + lab('底型', 1663, 230, '#e0e0e0');
  m += lab('顶型', 881, 174, '#1090e8') + lab('顶型', 1537, 505, '#1090e8');
  m += '<path d="M738 103l-11-5m0 0l4-1m-4 1l3 3" stroke="#bbb" fill="none"/><path d="M727 98q8 0 14 5" stroke="#bbb" fill="none"/>';
  m += '<text x="747" y="112" font-size="17" fill="#b0b0b0">3.70</text>';
  m += '<g clip-path="url(#cut1)"><text x="1286" y="760" font-size="17" fill="#b0b0b0">2.87</text></g>';
  m += '<g clip-path="url(#cut2)"><text x="1332" y="775" font-size="17" fill="#f020f0">底型</text></g>';
  m += '<rect x="1257" y="761" width="18" height="18" fill="#204a70"/><text x="1266" y="776" text-anchor="middle" font-size="16" fill="#e0e0e0">财</text>';
  m += '<rect x="1628" y="761" width="19" height="18" fill="#7a4a10"/><text x="1637.5" y="776" text-anchor="middle" font-size="16" fill="#e0e0e0">榜</text>';
  m += '<path d="M0 780H1787" stroke="#a00000" stroke-width="2"/>';
  byId('mainChart').innerHTML = m;

  // ---------- volume chart ----------
  const vy = z => 780 + z / 3;
  const volA = 'r1362 c1340 r1325 c1350 r1343 r1343 r1253 c1311 c1318 c1360 c698 c1022 c1227 r1330 r1352 c1333 r1240 c1293 c1333 r1375 r1315 c1320 c1315 r1384 r1384 r1330 c1358 c1382 c1365 c1373 r1360 r1362 r1325 c1368 r1362 c1373 r1397 r1362 c1373 c1368 r1298 c1265 c1320 r1357 r1384 c1382 r1393 r1357 r1343 r1307 r1330 r1338 r1154 c1297 c1318 r1177 r754 c978 r1163 c1270 r1150 c1265 c1247 c1297 r1366 r1303 r1041 c1166 c1237 c1283';
  const volB = 'r925 c1175 c1200 c1252 c1302 r1037 r880 c1063 c1157 c1100 r1158 c1221 c1261 c1333 c1325 r1330 r1343 r1226 c1320 r1360 c1383 c1392 r1380 c1385 c1348 r1375 r1365 c1400 c1248 r1380 r1397 r1375 r1380 r1312 r1365 r1388 r1410 r1348 c1356 r1333 r1380 c1400 r1388 c1370 r1360 c1351 r1307 r1325 r1375 r1360 r1347 r1384 c1382 r1307 r1343 c1392 r1285 r667 c91 c1130';
  let v = '';
  [842, 904, 966, 1027, 1089, 1150, 1212].forEach(y => { v += `<path d="M0 ${y + .5}H1711" stroke="#a00000" stroke-dasharray="2 4"/>`; });
  (volA + ' ' + volB).split(' ').forEach((s, i) => {
    const x = Math.round(1.7 + 12.85 * i), top = Math.round(vy(+s.slice(1))), bot = 1273;
    if (s[0] === 'c') v += `<rect x="${x}" y="${top}" width="11" height="${bot - top}" fill="#54ffff"/>`;
    else v += `<rect x="${x + .5}" y="${top + .5}" width="10" height="${bot - top - 1}" fill="#000" stroke="#f02020"/>`;
  });
  const vx = (ox, z) => ox + z / 1.742;
  const vseg = (ox, flat) => { const o = []; for (let i = 0; i < flat.length; i += 2) o.push([+vx(ox, flat[i]).toFixed(1), +vy(flat[i + 1]).toFixed(1)]); return o; };
  const white = [...vseg(0, [10,1350,70,1352,115,1345,145,1325,215,1316,230,1190,255,1140,275,1127,325,1127,345,1250,370,1298,400,1312,430,1318,460,1312,520,1342,580,1350,612,1372,680,1367,700,1360,780,1360,830,1372,890,1376,930,1330,1000,1325,1060,1376,1090,1368,1150,1335,1175,1290,1225,1290,1245,1255,1270,1130,1310,1075,1355,1063,1385,1180,1400,1225,1450,1270,1468,1300,1490,1250,1550,1210,1568,1165]),
    ...vseg(900, [12,1132,30,1160,70,1167,105,1175,125,1195,150,1130,185,1093,213,1047,235,1075,260,1150,320,1250,370,1322,385,1312,430,1315,475,1335,510,1380,530,1385,580,1380,610,1375,635,1350,660,1358,780,1368,870,1370,960,1370,1000,1377,1060,1345,1135,1345,1175,1370,1200,1358,1240,1362,1270,1340,1285,1200,1300,1060,1312,955,1330,918])];
  const yellow = [...vseg(0, [10,1330,30,1345,120,1345,145,1338,210,1332,230,1265,260,1232,290,1222,380,1220,438,1222,460,1285,490,1318,575,1332,612,1352,670,1352,700,1362,840,1368,900,1365,920,1352,1070,1352,1125,1340,1150,1352,1170,1335,1230,1320,1245,1300,1270,1230,1300,1187,1335,1175,1355,1158,1380,1155,1400,1163,1430,1163,1470,1180,1500,1220,1530,1237,1555,1237,1568,1225]),
    ...vseg(900, [20,1205,100,1190,125,1160,150,1145,210,1110,235,1135,325,1155,370,1235,420,1270,480,1330,525,1350,590,1355,615,1372,640,1365,740,1365,760,1358,800,1362,820,1370,840,1362,870,1372,910,1365,960,1367,985,1378,1015,1375,1060,1357,1170,1357,1240,1352,1265,1352,1290,1270,1310,1155,1330,1135])];
  v += poly(white, '#e4e4e4', 1.3) + poly(yellow, '#e8e800', 1.6);
  // volume legend
  v += '<circle cx="11" cy="794" r="8" fill="#808080"/><path d="M7 792l4 4 4-4" fill="none" stroke="#ddd" stroke-width="2"/>';
  v += '<text x="26" y="800" font-size="18" fill="#c8c8c8">VOLUME: 188207.00</text><path d="M205 787v13m-3-4l3 5 3-5" stroke="#34e0e8" fill="none" stroke-width="1.6"/>';
  v += '<text x="221" y="800" font-size="18" fill="#c8c8c8">MA5: 305749.28</text><path d="M359 801v-13m-3 4l3-5 3 5" stroke="#f02020" fill="none" stroke-width="1.6"/>';
  v += '<text x="375" y="800" font-size="18" fill="#e8e800">MA10: 186752.89</text><path d="M524 801v-13m-3 4l3-5 3 5" stroke="#f02020" fill="none" stroke-width="1.6"/>';
  // axis
  v += '<path d="M1711 781V1282" stroke="#a00000" stroke-width="2"/>';
  [70000, 60000, 50000, 40000, 30000, 20000, 10000].forEach((n, i) => {
    const y = 842 + i * 61.6;
    v += `<path d="M1711 ${y}h7M1711 ${y + 31}h4" stroke="#c00000"/><text x="1778" y="${y + 7}" text-anchor="end" font-size="19" fill="#d82020">${n}</text>`;
  });
  v += '<rect x="1712.5" y="1259.500" width="37" height="22" fill="none" stroke="#a00000"/><text x="1714" y="1277" font-size="16" fill="#c83030">X10</text>';
  byId('volChart').innerHTML = v;

  // ---------- date axis ----------
  let d = '';
  [593, 668, 743, 883, 950, 1016, 1137, 1189, 1240, 1355, 1425, 1503, 1636].forEach(x => { d += `<path d="M${x} 1282v4" stroke="#c00000"/>`; });
  [[252, '7'], [520, '8'], [815, '9'], [1085, '10'], [1291, '11'], [1573, '12']].forEach(([x, t]) => {
    d += `<path d="M${x - 1} 1282v24" stroke="#a00000"/><text x="${x + 1}" y="1301" font-size="18" fill="#e02020">${t}</text>`;
  });
  d += '<text x="8" y="1301" font-size="18" fill="#e02020">2022年</text>';
  d += '<rect x="359.500" y="1283.500" width="117" height="21" fill="#000080" stroke="#2040c0"/><text x="362" y="1300" font-size="16.500" fill="#c0c0d0">2022/07/14/四</text>';
  d += '<path d="M1711 1282v24" stroke="#a00000" stroke-width="2"/><text x="1728" y="1301" font-size="18" fill="#b8b8b8">日线</text>';
  byId('dateAxis').innerHTML = d;
</script>
</body>
</html>
